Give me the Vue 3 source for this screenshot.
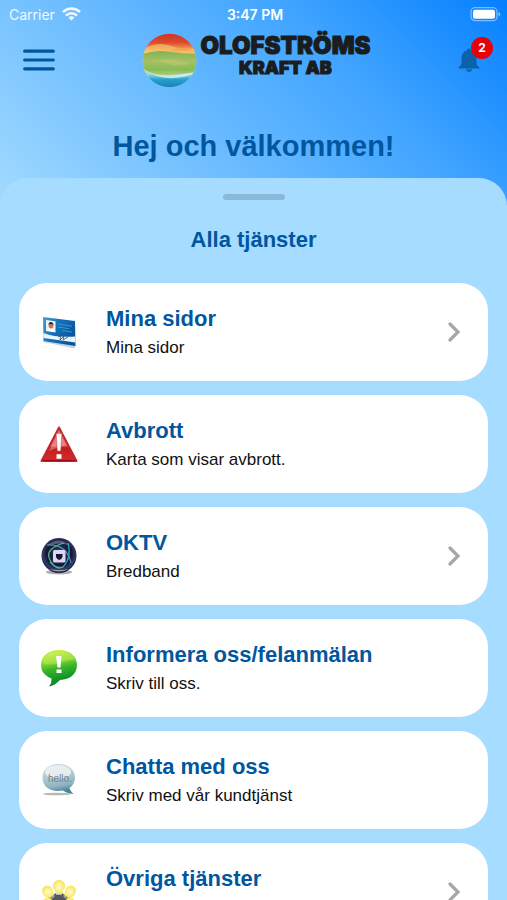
<template>
  <div class="app">
    <div class="status-bar">
      <div class="carrier">
        <span>Carrier</span>
        <svg width="19" height="14" viewBox="0 0 19 14" fill="none" stroke="#fff" stroke-width="2.6">
          <path d="M1 5.2 A12 12 0 0 1 18 5.2" />
          <path d="M4 8.6 A7.7 7.7 0 0 1 15 8.6" />
          <path d="M9.500 13.500 L6.500 10.500 A4.200 4.200 0 0 1 12.500 10.500 Z" fill="#fff" stroke="none" />
        </svg>
      </div>
      <span class="time">3:47 PM</span>
      <svg class="battery" width="31" height="15" viewBox="0 0 31 15">
        <rect x="1" y="0.700" width="26" height="13" rx="4" fill="none" stroke="#fff" stroke-opacity="0.450" stroke-width="1.300" />
        <rect x="3" y="2.700" width="22" height="9" rx="2" fill="#fff" />
        <path d="M28.500 5 v4.500 q1.800 -0.700 1.800 -2.250 t-1.800 -2.250z" fill="#fff" fill-opacity="0.500" />
      </svg>
    </div>

    <header class="header">
      <button class="menu-button" type="button" aria-label="Meny">
        <svg width="32" height="24" viewBox="0 0 32 24" stroke="#00569f" stroke-width="3.200" stroke-linecap="round">
          <path d="M1.700 3.200 H30.300 M1.700 12 H30.300 M1.700 20.800 H30.300" />
        </svg>
      </button>

      <div class="logo">
        <svg width="55" height="55" viewBox="0 0 56 56">
          <defs>
            <linearGradient id="sky" x1="0" y1="0" x2="0" y2="1">
              <stop offset="0" stop-color="#cf3325" />
              <stop offset="0.170" stop-color="#dc4a2c" />
              <stop offset="0.330" stop-color="#f5b65e" />
              <stop offset="0.450" stop-color="#f4e07a" />
            </linearGradient>
            <linearGradient id="field" x1="0" y1="0" x2="0" y2="1">
              <stop offset="0" stop-color="#7fb455" />
              <stop offset="0.400" stop-color="#a5c163" />
              <stop offset="0.750" stop-color="#87bb58" />
              <stop offset="1" stop-color="#b9d17b" />
            </linearGradient>
            <linearGradient id="sea" x1="0" y1="0" x2="0" y2="1">
              <stop offset="0" stop-color="#e6f2e6" />
              <stop offset="0.350" stop-color="#8ed0e6" />
              <stop offset="0.600" stop-color="#249fcd" />
              <stop offset="1" stop-color="#1680b8" />
            </linearGradient>
            <clipPath id="globe"><circle cx="28" cy="28" r="27.300" /></clipPath>
          </defs>
          <g clip-path="url(#globe)">
            <rect width="56" height="56" fill="url(#sky)" />
            <path d="M0 17 Q16 8 29 13 T56 15 V19 Q42 14 30 17 T0 23Z" fill="#f5ca6c" opacity="0.600" />
            <path d="M0 22 Q13 17 27 19 T56 21 V44 H0Z" fill="url(#field)" />
            <path d="M12 29 Q24 25 36 28 T50 31 Q36 35 25 31 T12 29Z" fill="#c4c971" opacity="0.500" />
            <path d="M0 35 Q11 45 27 43 T56 40 V56 H0Z" fill="url(#sea)" />
            <path d="M2 37 Q12 44 28 43 T55 40 Q44 46 29 46 T2 37Z" fill="#f2f8ec" opacity="0.700" />
          </g>
        </svg>
        <div class="logo-text">
          <span class="logo-name">OLOFSTRÖMS</span>
          <span class="logo-sub">KRAFT AB</span>
        </div>
      </div>

      <button class="bell-button" type="button" aria-label="Aviseringar">
        <svg width="22" height="24" viewBox="0 0 22 24" fill="#0b62ab">
          <path d="M11 0.500 C9.700 0.500 9 1.300 9 2.500 C5.500 3.500 3.500 6.500 3.500 10.500 V15.500 Q3.500 17 0.500 19.500 V20.500 H21.500 V19.500 Q18.500 17 18.500 15.500 V10.500 C18.500 6.500 16.500 3.500 13 2.500 C13 1.300 12.300 0.500 11 0.500Z" />
          <path d="M8 21.200 H14 Q13.700 23.800 11 23.800 T8 21.200Z" />
        </svg>
        <span class="badge">2</span>
      </button>
    </header>

    <h1 class="greeting">Hej och välkommen!</h1>

    <main class="sheet">
      <div class="handle"></div>
      <h2 class="sheet-title">Alla tjänster</h2>

      <nav class="services">
        <a v-for="service in services" :key="service.icon" class="card" href="#">
          <span class="card-icon">
            <svg v-if="service.icon === 'card'" width="40" height="40" viewBox="0 0 40 40">
              <defs>
                <linearGradient id="idcard" x1="0" y1="0" x2="1" y2="0.500">
                  <stop offset="0" stop-color="#4b9fd4" />
                  <stop offset="0.450" stop-color="#1473b9" />
                  <stop offset="1" stop-color="#0754a0" />
                </linearGradient>
              </defs>
              <path d="M4.500 30 L35.500 36.500 L36.800 33 L5 27Z" fill="#9fb0bf" opacity="0.600" />
              <path d="M4 5 L36 9 L36.500 34 L4.500 29Z" fill="url(#idcard)" />
              <path d="M4.300 21 Q18 26 36.300 24.500 L36.400 30.500 L4.400 26Z" fill="#e8f5fd" />
              <path d="M7 8 L16.500 9.300 V20.500 L7 19Z" fill="#e9f3f8" />
              <path d="M8.500 18.800 Q9 15.500 12 16 T15.500 20Z" fill="#fff" />
              <ellipse cx="12" cy="13.500" rx="2.400" ry="3" fill="#c4785b" />
              <path d="M9.400 12.500 Q9.500 9.700 12 10 T14.500 13 Q12 11.500 9.400 12.500Z" fill="#32251f" />
              <path d="M19 12 L33 14.200 M19 15 L30 16.700 M23 18.500 L33 20" stroke="#3da3d6" stroke-width="0.800" />
              <path d="M19 25 L22 23.500 L21 28 L25 24 L24 28 L29 25" fill="none" stroke="#334c62" stroke-width="0.800" />
            </svg>

            <svg v-else-if="service.icon === 'warning'" width="40" height="40" viewBox="0 0 40 40">
              <defs>
                <linearGradient id="alert" x1="0" y1="0" x2="0" y2="1">
                  <stop offset="0" stop-color="#ce302e" />
                  <stop offset="0.550" stop-color="#dc5552" />
                  <stop offset="0.600" stop-color="#c4191d" />
                  <stop offset="1" stop-color="#d92b2c" />
                </linearGradient>
              </defs>
              <path d="M20 3.500 L37.500 37 H2.500Z" fill="url(#alert)" stroke="#c3282b" stroke-width="2" stroke-linejoin="round" />
              <path d="M20 6 L27.500 21 Q18 23.500 10 27Z" fill="#fff" opacity="0.300" />
              <path d="M17.200 9.500 H22.800 L21.700 27 H18.300Z M17.300 30 H22.700 V35 H17.300Z" fill="#fff" stroke="#ce4444" stroke-width="0.500" />
              <path d="M4 36.500 H36" stroke="#a20e15" stroke-width="1.500" />
            </svg>

            <svg v-else-if="service.icon === 'tv'" width="40" height="40" viewBox="0 0 40 40">
              <defs>
                <radialGradient id="orb" cx="0.500" cy="0.450" r="0.550">
                  <stop offset="0" stop-color="#2a3e79" />
                  <stop offset="0.650" stop-color="#14172f" />
                  <stop offset="0.850" stop-color="#343c70" />
                  <stop offset="1" stop-color="#10132a" />
                </radialGradient>
              </defs>
              <ellipse cx="20" cy="36" rx="13" ry="2.500" fill="#777" opacity="0.600" />
              <circle cx="20" cy="19.500" r="17.500" fill="url(#orb)" />
              <path d="M8 10 Q19 -1 32 10 Q20 5 8 10Z" fill="#a4acd0" opacity="0.450" />
              <g fill="none" stroke-width="1.200">
                <path d="M29 7 Q33 22 24 31 Q17 33 11 26" stroke="#31a1cb" />
                <path d="M8 9 Q28 8 32 27" stroke="#4f93b9" />
                <path d="M25 7 Q5 13 11 24 T24 31" stroke="#61b97b" />
              </g>
              <rect x="14" y="14" width="12.500" height="12.500" rx="1.500" fill="#dcd6ef" />
              <path d="M17 18 H23.500 V21 Q22.500 23.500 20.300 24 Q18 23.500 17 21Z" fill="#171530" />
              <path d="M10 33 Q20 38 30 33 Q20 35 10 33Z" fill="#e0e0e7" opacity="0.600" />
            </svg>

            <svg v-else-if="service.icon === 'report'" width="40" height="40" viewBox="0 0 40 40">
              <defs>
                <linearGradient id="lime" x1="0.300" y1="0" x2="0.500" y2="1">
                  <stop offset="0" stop-color="#d0ef45" />
                  <stop offset="0.300" stop-color="#8fdb30" />
                  <stop offset="0.500" stop-color="#3cb728" />
                  <stop offset="0.800" stop-color="#11932a" />
                  <stop offset="1" stop-color="#1c8531" />
                </linearGradient>
              </defs>
              <path d="M20 2 C31 2 38 8.500 38 17 C38 26 31 31.500 21 32 Q16 37.500 10 38.500 Q13 34.500 12.500 30.500 C6 28 2 23.500 2 17 C2 8.500 9 2 20 2Z" fill="url(#lime)" />
              <path d="M4 15 C4 7 11 3.500 20 3.500 C28 3.500 34 7 35.500 12 C24 11 16 20 4 15Z" fill="#e6fa83" opacity="0.250" />
              <path d="M17 8 H22.500 L21.500 19.500 H18.500Z M17.500 21.500 H22.500 V25 H17.500Z" fill="#fff" />
            </svg>

            <svg v-else-if="service.icon === 'chat'" width="40" height="40" viewBox="0 0 40 40">
              <defs>
                <linearGradient id="mist" x1="0" y1="0" x2="0.200" y2="1">
                  <stop offset="0" stop-color="#c7d6dc" />
                  <stop offset="0.450" stop-color="#b4cbd4" />
                  <stop offset="0.800" stop-color="#8eb3c1" />
                  <stop offset="1" stop-color="#4d8298" />
                </linearGradient>
              </defs>
              <ellipse cx="18" cy="34" rx="14" ry="1.300" fill="#888" opacity="0.600" />
              <path d="M19 4 C29 4 36 9.500 36 17.500 C36 22 34 25.500 30.500 28 Q31 31 34.500 34 Q28 33.500 23.500 30.500 C11 32.500 3.500 26.500 3.500 17.500 C3.500 9.500 10 4 19 4Z" fill="url(#mist)" />
              <ellipse cx="19" cy="12" rx="13" ry="7" fill="#fff" opacity="0.650" />
              <text x="9" y="22" font-family="Liberation Sans, sans-serif" font-size="10" fill="#6f7f88">hello.</text>
            </svg>

            <svg v-else width="40" height="40" viewBox="0 0 40 40">
              <defs>
                <radialGradient id="bulb">
                  <stop offset="0" stop-color="#fffcd8" />
                  <stop offset="0.600" stop-color="#fbf08a" />
                  <stop offset="1" stop-color="#f5e45c" />
                </radialGradient>
              </defs>
              <path d="M14 23 L17 21 H23 L26 23 L29 22 L31 26 L27 29 V34 H13 V29 L9 26 L11 22Z" fill="#55585d" />
              <g fill="url(#bulb)">
                <path d="M20 8 A6 6 0 0 1 24 18.500 L23 22 H17 L16 18.500 A6 6 0 0 1 20 8Z" />
                <path d="M3 18 A5.500 5.500 0 0 1 13.500 17.500 L15 23 L11 26 Q3 25 3 18Z" />
                <path d="M37 18 A5.500 5.500 0 0 0 26.500 17.500 L25 23 L29 26 Q37 25 37 18Z" />
                <circle cx="9" cy="30" r="4.500" />
                <circle cx="31" cy="30" r="4.500" />
              </g>
              <path d="M17 22.500 H23 M12.500 26.500 L15.500 23.500 M27.500 26.500 L24.500 23.500" stroke="#b2b5b9" stroke-width="1.200" />
            </svg>
          </span>

          <span class="card-body">
            <span class="card-title">{{ service.title }}</span>
            <span class="card-text">{{ service.text }}</span>
          </span>

          <svg v-if="service.arrow" class="arrow" width="12" height="20" viewBox="0 0 12 20">
            <path d="M2 2 L10 10 L2 18" fill="none" stroke="#a6a6a6" stroke-width="3.200" stroke-linecap="round" stroke-linejoin="miter" />
          </svg>
        </a>
      </nav>
    </main>
  </div>
</template>

<script setup>
const services = [
  { icon: 'card', title: 'Mina sidor', text: 'Mina sidor', arrow: true },
  { icon: 'warning', title: 'Avbrott', text: 'Karta som visar avbrott.', arrow: false },
  { icon: 'tv', title: 'OKTV', text: 'Bredband', arrow: true },
  { icon: 'report', title: 'Informera oss/felanmälan', text: 'Skriv till oss.', arrow: false },
  { icon: 'chat', title: 'Chatta med oss', text: 'Skriv med vår kundtjänst', arrow: false },
  { icon: 'more', title: 'Övriga tjänster', text: '', arrow: true }
]
</script>

<style>
body {
  margin: 0;
}
</style>

<style scoped>
.app {
  display: flex;
  flex-direction: column;
  height: 100vh;
  overflow: hidden;
  font-family: "Liberation Sans", Arial, sans-serif;
  background: linear-gradient(45deg, #a5dcff 0, #3ea3ff 70%, #0680ff 100%) top / 100% 220px no-repeat #a5dcff;
}

.status-bar {
  display: grid;
  grid-template-columns: 1fr auto 1fr;
  align-items: center;
  height: 28px;
  padding: 0 6px 0 9px;
  color: #fff;
  font-family: Inter, sans-serif;
  font-size: 14px;
}

.carrier {
  display: flex;
  align-items: center;
  gap: 7px;
  opacity: 0.9;
}

.time {
  font-weight: 600;
}

.battery {
  justify-self: end;
}

.header {
  display: flex;
  align-items: center;
  justify-content: space-between;
  height: 64px;
  padding: 0 14px 0 23px;
}

button {
  padding: 0;
  border: 0;
  background: none;
  cursor: pointer;
}

.menu-button {
  display: flex;
}

.logo {
  display: flex;
  gap: 3px;
}

.logo-text {
  display: flex;
  flex-direction: column;
  align-items: center;
  color: #1b1c1c;
  font-family: Inter, sans-serif;
  font-weight: 900;
  -webkit-text-stroke: 1px #1b1c1c;
}

.logo-name {
  font-size: 24px;
  line-height: 25px;
}

.logo-sub {
  font-size: 18px;
  line-height: 20px;
}

.bell-button {
  position: relative;
  display: flex;
  padding-right: 13px;
}

.badge {
  position: absolute;
  top: -11px;
  right: 0;
  width: 22px;
  height: 22px;
  border-radius: 50%;
  background: #e60008;
  color: #fff;
  font-family: Inter, sans-serif;
  font-size: 12px;
  font-weight: 700;
  line-height: 22px;
}

.greeting {
  margin: 36px 0 13px;
  color: #00569f;
  font-size: 29px;
  line-height: 37px;
  text-align: center;
}

.sheet {
  flex: 1;
  min-height: 0;
  padding: 16px 19px;
  overflow-y: auto;
  scrollbar-width: none;
  border-radius: 28px 28px 0 0;
  background: #a5dcff;
}

.handle {
  width: 62px;
  height: 6px;
  margin: 0 auto;
  border-radius: 3px;
  background: #8bb9d9;
}

.sheet-title {
  margin: 26px 0 30px;
  color: #00569f;
  font-size: 22px;
  line-height: 27px;
  text-align: center;
}

.services {
  display: flex;
  flex-direction: column;
  gap: 14px;
}

.card {
  display: flex;
  align-items: center;
  box-sizing: border-box;
  min-height: 98px;
  padding: 0 28px 0 20px;
  border-radius: 28px;
  background: #fff;
  text-decoration: none;
}

.card-icon {
  display: flex;
  margin-right: 27px;
}

.card-body {
  display: flex;
  flex: 1;
  flex-direction: column;
  padding-top: 2px;
}

.card-title {
  color: #00569f;
  font-size: 22px;
  font-weight: 700;
  line-height: 30px;
}

.card-text {
  min-height: 28px;
  color: #111;
  font-size: 17px;
  line-height: 28px;
}
</style>
